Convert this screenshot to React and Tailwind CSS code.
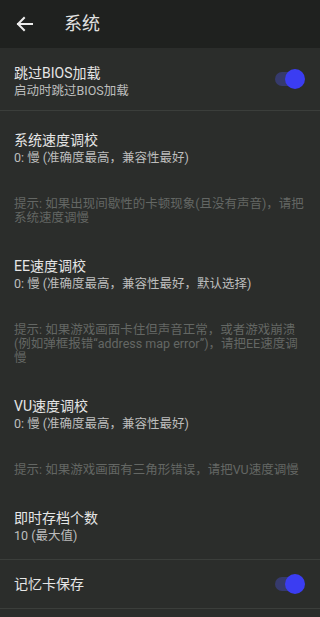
import React from 'react';

const Toggle = () => (
  <div className="relative w-[30px] h-[20px] shrink-0 mr-[15px] flex items-center">
    <div className="w-[27px] h-[14px] rounded-full bg-[#363a6c]" />
    <div className="absolute right-0 top-0 w-[20px] h-[20px] rounded-full bg-[#3b3df2]" />
  </div>
);

const Divider = () => <div className="h-px bg-[#3b3e3b]" />;

const items = [
  {
    title: '系统速度调校',
    summary: '0: 慢 (准确度最高，兼容性最好)',
    hint: '提示: 如果出现间歇性的卡顿现象(且没有声音)，请把系统速度调慢',
    pt: 'pt-[19px]',
  },
  {
    title: 'EE速度调校',
    summary: '0: 慢 (准确度最高，兼容性最好，默认选择)',
    hint: '提示: 如果游戏画面卡住但声音正常，或者游戏崩溃(例如弹框报错“address map error”)，请把EE速度调慢',
    pt: 'pt-4',
  },
  {
    title: 'VU速度调校',
    summary: '0: 慢 (准确度最高，兼容性最好)',
    hint: '提示: 如果游戏画面有三角形错误，请把VU速度调慢',
    pt: 'pt-4',
  },
  {
    title: '即时存档个数',
    summary: '10 (最大值)',
    pt: 'pt-4',
  },
];

export default function App() {
  return (
    <div
      className="w-[320px] h-[617px] overflow-hidden bg-[#2b2d2b]"
      style={{ fontFamily: 'Roboto, "Noto Sans CJK SC", sans-serif' }}
    >
      <div className="h-12 bg-[#1f211f] flex items-center">
        <svg width="24" height="24" viewBox="0 0 24 24" className="ml-[12px]" fill="none" stroke="#ececec" strokeWidth="2" strokeLinecap="square">
          <path d="M6 12h14" />
          <path d="M12 6l-6 6 6 6" />
        </svg>
        <span className="ml-[28px] text-[18px] text-[#e2e2e2] leading-6">系统</span>
      </div>

      <div className="flex items-center h-[62px] pl-[14px]">
        <div className="flex-1 pt-[4px]">
          <div className="text-[14px] leading-5 text-[#e6e6e6]">跳过BIOS加载</div>
          <div className="text-[12.5px] leading-4 text-[#bdbdbd]">启动时跳过BIOS加载</div>
        </div>
        <Toggle />
      </div>
      <Divider />

      {items.map((it) => (
        <div key={it.title} className={`${it.pt} pb-[15px] pl-[14px] pr-[14px]`}>
          <div className="text-[14px] leading-5 text-[#e6e6e6]">{it.title}</div>
          <div className="text-[12.5px] leading-4 text-[#bdbdbd]">{it.summary}</div>
          {it.hint && (
            <div className="mt-[31px] text-[12.5px] leading-[14px] text-[#646764]">{it.hint}</div>
          )}
        </div>
      ))}
      <Divider />

      <div className="flex items-center h-[48px] pl-[14px]">
        <div className="flex-1 text-[14px] leading-5 text-[#e6e6e6]">记忆卡保存</div>
        <Toggle />
      </div>
      <Divider />
    </div>
  );
}
